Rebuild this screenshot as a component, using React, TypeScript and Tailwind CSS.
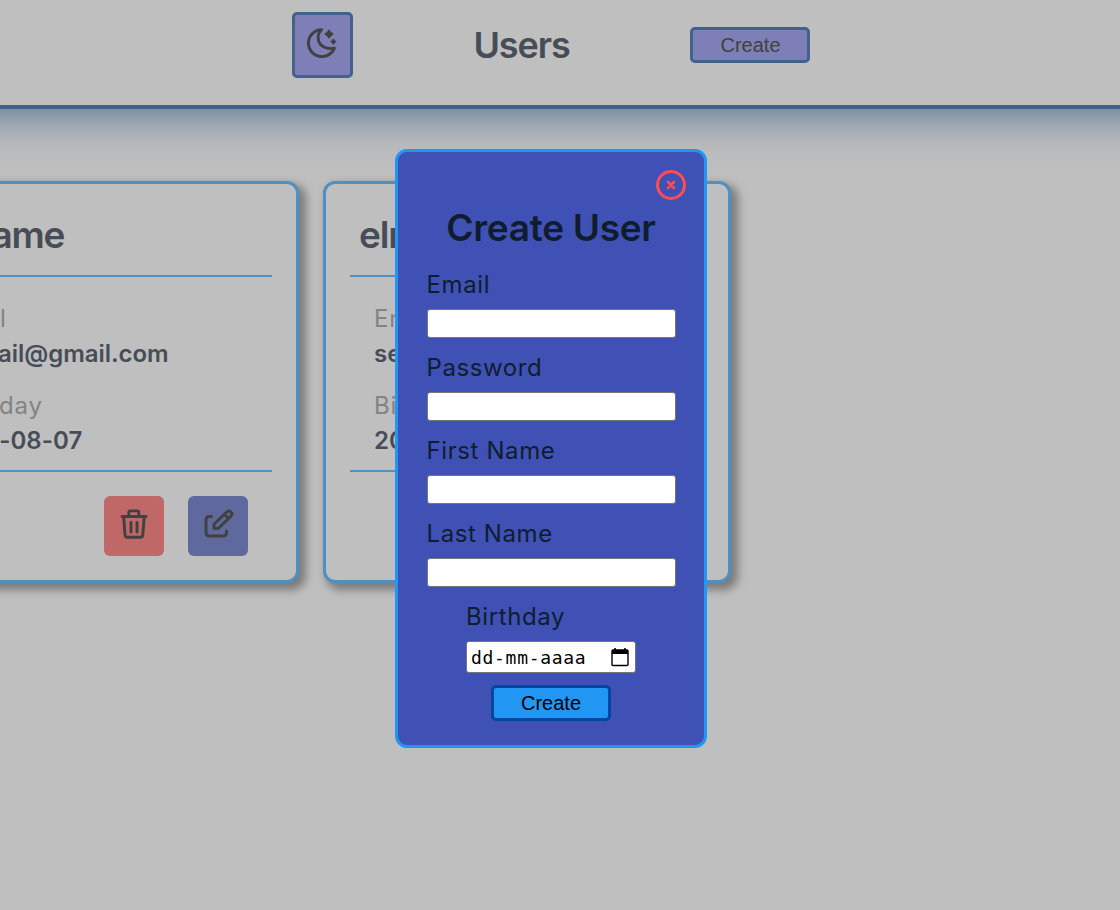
import type { ReactNode } from "react";

function MoonIcon() {
  return (
    <svg className="-ml-[3px]" width="32" height="32" viewBox="0 0 32 32" fill="none" stroke="#414141" strokeWidth="2.9" strokeLinecap="round" strokeLinejoin="round">
      <path d="M16.7 2.6A13.5 13.5 0 1 0 29.4 21.2C21.5 23 14.8 19 13.5 13.4C12.5 9.2 13.6 5.2 16.7 2.6Z" />
      <path d="M24 3.2Q25.2 5.8 27.8 7Q25.2 8.2 24 10.8Q22.8 8.2 20.2 7Q22.8 5.8 24 3.2ZM28.4 12.3Q29.1 13.9 30.7 14.6Q29.1 15.3 28.4 16.9Q27.7 15.3 26.1 14.6Q27.7 13.9 28.4 12.3Z" fill="#414141" strokeWidth="1.4" />
    </svg>
  );
}

function TrashIcon() {
  return (
    <svg width="30" height="32" viewBox="0 0 30 32" fill="none" stroke="#414141" strokeWidth="2.9" strokeLinecap="round" strokeLinejoin="round">
      <path d="M3 8.5H27M9.8 8V4.5Q9.8 2.9 11.4 2.9H18.2Q19.8 2.9 19.8 4.5V8M4.7 9L6 27Q6.2 29.3 8.5 29.3H21.3Q23.5 29.3 23.8 27L25.2 9M12 14.5V24M18 14.5V24" />
    </svg>
  );
}

function EditIcon() {
  return (
    <svg className="ml-px" width="32" height="32" viewBox="0 0 32 32" fill="none" stroke="#414141" strokeWidth="2.9" strokeLinecap="round" strokeLinejoin="round">
      <path d="M8.5 8.5H6.5Q3 8.5 3 12V24.5Q3 28 6.5 28H20Q23.5 28 23.5 24.5V23M11 20.5V16.2L23.9 3.9Q26 2.2 28 4Q29.8 6 28 8.1L15.3 20.5ZM21.5 6.5L25.3 10.3" />
    </svg>
  );
}

function CreateButton({ dim = false }: { dim?: boolean }) {
  return (
    <button className={`h-9 w-[120px] rounded-[5px] border-[3px] font-['Liberation_Sans',sans-serif] text-[20px] leading-none ${dim ? "border-[#40628d] bg-[#7d7fb6] pl-px text-[#414141]" : "mt-[3px] border-[#0047a0] bg-[#2196f3] text-black"}`}>
      Create
    </button>
  );
}

function UserCard({ name, email, birthday }: { name: string; email: string; birthday: string }) {
  return (
    <article className="flex h-[402px] w-[408px] shrink-0 flex-col rounded-xl border-[3px] border-[#5090c0] bg-[#bfbfbf] px-6 shadow-[5px_5px_8px_2px_#7b7b7b]">
      <h2 className="flex h-[93px] items-center border-b-2 border-[#5090c0] px-[9px] pt-[11px] text-[37px] font-semibold tracking-[-1.2px]">{name}</h2>
      <dl className="h-[195px] border-b-2 border-[#5090c0] px-6 pt-6 text-[24px] leading-[35px]">
        <dt className="tracking-[0.8px] text-[#838383]">Email</dt>
        <dd className="mb-[17px] font-semibold tracking-[-0.05px]">{email}</dd>
        <dt className="tracking-[0.8px] text-[#838383]">Birthday</dt>
        <dd className="font-semibold tracking-[0.1px]">{birthday}</dd>
      </dl>
      <div className="flex justify-end gap-6 px-6 pt-6">
        <button aria-label="Delete" className="flex size-[60px] items-center justify-center rounded-md bg-[#c06767] pb-1"><TrashIcon /></button>
        <button aria-label="Edit" className="flex size-[60px] items-center justify-center rounded-md bg-[#60699d] pb-1"><EditIcon /></button>
      </div>
    </article>
  );
}

function Field({ label, children }: { label: string; children?: ReactNode }) {
  return (
    <label className="block h-[83px] text-[24px] leading-9 tracking-[0.6px]">
      <span className="block">{label}</span>
      {children ?? <input className="mt-[6px] block h-[29px] w-[249px] rounded-[3px] border border-[#767676] bg-white px-1 text-base" />}
    </label>
  );
}

export default function App() {
  return (
    <div className="relative h-[910px] w-[1120px] overflow-hidden bg-[#bfbfbf] font-[Inter,sans-serif] text-[#474d57]">
      <header className="-mx-16 flex h-[109px] justify-center border-b-4 border-[#40628d] pr-[18px] shadow-[0_0_50px_#40628d]">
        <div className="flex h-[90px] w-[518px] items-center justify-between">
          <button aria-label="Toggle theme" className="flex h-[66px] w-[61px] items-center justify-center rounded-[5px] border-[3px] border-[#40628d] bg-[#7d7fb6] pb-1"><MoonIcon /></button>
          <h1 className="text-[36px] font-semibold tracking-[-1.1px]">Users</h1>
          <CreateButton dim />
        </div>
      </header>
      <main className="-ml-[109px] flex gap-6 pt-[72px]">
        <UserCard name="elrname" email="elemail@gmail.com" birthday="2001-08-07" />
        <UserCard name="elname" email="segundo@gmail.com" birthday="2001-05-12" />
      </main>
      <section role="dialog" aria-label="Create User" className="absolute left-[395px] top-[149px] flex h-[599px] w-[312px] flex-col items-center rounded-xl border-[3px] border-[#2196f3] bg-[#3f51b5] text-[#101d2e]">
        <button aria-label="Close" className="mr-[18px] mt-[18px] flex size-[30px] items-center justify-center self-end rounded-full border-[3px] border-[#ff4d4f]">
          <svg width="10" height="10" viewBox="0 0 10 10" stroke="#ff4d4f" strokeWidth="2.8" strokeLinecap="round"><path d="M2 2L8 8M8 2L2 8" /></svg>
        </button>
        <h2 className="flex h-[55px] items-center text-[37px] font-semibold tracking-[-0.3px]">Create User</h2>
        <form className="flex flex-col items-center pt-3">
          <Field label="Email" />
          <Field label="Password" />
          <Field label="First Name" />
          <Field label="Last Name" />
          <Field label="Birthday">
            <span className="mt-[6px] flex h-8 w-[170px] items-center justify-between rounded-[3px] border border-[#767676] bg-white pl-1 pr-[6px] text-black">
              <span className="pt-px font-['DejaVu_Sans_Mono',monospace] text-[18px] tracking-[0.7px]">dd-mm-aaaa</span>
              <svg width="18" height="19" viewBox="0 0 18 19"><path d="M2 2H16Q17 2 17 3V16.5Q17 17.5 16 17.5H2Q1 17.5 1 16.5V3Q1 2 2 2Z" fill="none" stroke="black" strokeWidth="1.4" /><path d="M1 2H17V6H1ZM3.2 0H4.8V3H3.2ZM13.2 0H14.8V3H13.2Z" fill="black" /></svg>
            </span>
          </Field>
          <CreateButton />
        </form>
      </section>
    </div>
  );
}
